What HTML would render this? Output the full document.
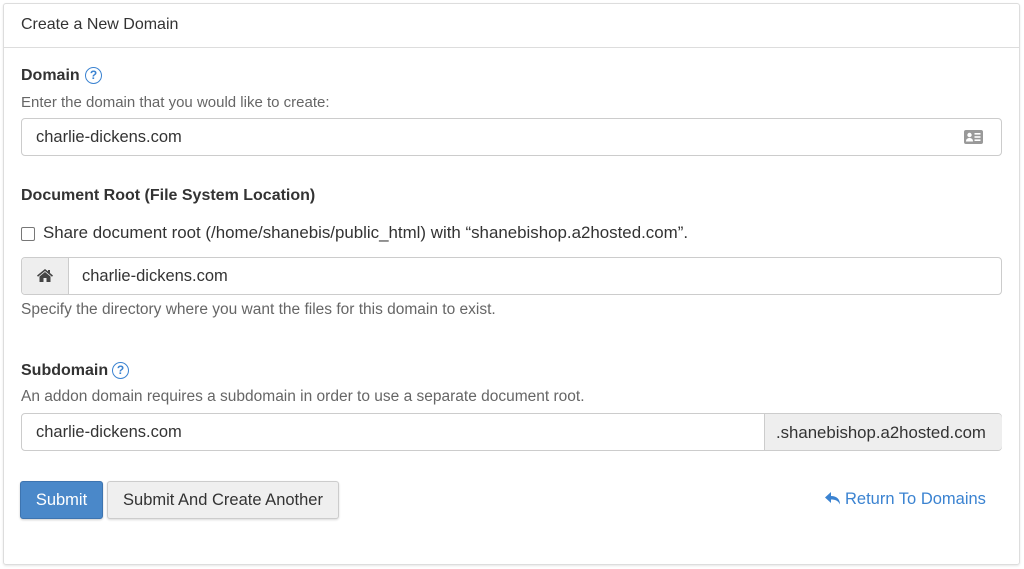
<!DOCTYPE html>
<html><head><meta charset="utf-8"><style>
*{box-sizing:border-box;margin:0;padding:0}
body{width:1024px;height:569px;background:#fff;font-family:"Liberation Sans",sans-serif;color:#333;position:relative;overflow:hidden}
.abs{position:absolute;white-space:nowrap}
.panel{position:absolute;left:3px;top:3px;width:1017px;height:562px;border:1px solid #ddd;border-radius:3px;box-shadow:0 1px 2px rgba(0,0,0,.1)}
.hdr{position:absolute;left:3px;top:47px;width:1017px;height:1px;background:#ddd}
.lbl{font-weight:bold;font-size:16px;color:#333}
.txt{font-size:15px;color:#666}
.inp{position:absolute;border:1px solid #ccc;border-radius:4px;background:#fff;font-size:16.5px;color:#333}
.help{position:absolute;width:17px;height:17px;border:1.7px solid #3b83d1;border-radius:50%;color:#3b83d1;font-size:12px;font-weight:bold;text-align:center;line-height:14px}
</style></head><body>
<div class="panel"></div>
<div class="hdr"></div>
<div class="abs" style="left:21px;top:16px;font-size:16px;color:#333">Create a New Domain</div>

<div class="abs lbl" style="left:21px;top:67px">Domain</div>
<div class="help" style="left:85px;top:67px">?</div>
<div class="abs txt" style="left:21px;top:94px">Enter the domain that you would like to create:</div>
<div class="inp" style="left:21px;top:118px;width:981px;height:38px"><span class="abs" style="left:14px;top:9px">charlie-dickens.com</span>
<svg class="abs" style="left:942px;top:11px" width="19" height="14" viewBox="0 0 19 14"><rect x="0" y="0" width="19" height="14" rx="2" fill="#999"/><circle cx="5.5" cy="5" r="2.2" fill="#fff"/><path d="M2 11.5c0-2.5 1.5-3.5 3.5-3.5s3.5 1 3.5 3.5z" fill="#fff"/><rect x="10.5" y="3" width="6" height="1.6" fill="#fff"/><rect x="10.5" y="6.2" width="6" height="1.6" fill="#fff"/><rect x="10.5" y="9.4" width="6" height="1.6" fill="#fff"/></svg></div>

<div class="abs lbl" style="left:21px;top:187px">Document Root (File System Location)</div>
<div class="abs" style="left:21px;top:227px;width:14px;height:14px;border:1px solid #777;border-radius:2px"></div>
<div class="abs" style="left:43px;top:223px;font-size:16.9px;color:#333">Share document root (/home/shanebis/public_html) with “shanebishop.a2hosted.com”.</div>
<div class="inp" style="left:21px;top:257px;width:981px;height:38px">
<div class="abs" style="left:0;top:0;width:47px;height:36px;background:#eee;border-right:1px solid #ccc;border-radius:4px 0 0 4px"></div>
<svg class="abs" style="left:15px;top:11px" width="16" height="13" viewBox="0 0 16 13"><path d="M8 0L0 6.5l1 1.2L8 2l7 5.7 1-1.2L13 4V1h-2v1.4z" fill="#444"/><path d="M2.5 7.5L8 3l5.5 4.5V13H9.5V9h-3v4h-4z" fill="#444"/></svg>
<span class="abs" style="left:60px;top:9px">charlie-dickens.com</span></div>
<div class="abs txt" style="left:21px;top:301px;font-size:15.5px">Specify the directory where you want the files for this domain to exist.</div>

<div class="abs lbl" style="left:21px;top:362px">Subdomain</div>
<div class="help" style="left:112px;top:362px">?</div>
<div class="abs txt" style="left:21px;top:388px;font-size:15.5px">An addon domain requires a subdomain in order to use a separate document root.</div>
<div class="inp" style="left:21px;top:413px;width:981px;height:38px"><span class="abs" style="left:14px;top:9px">charlie-dickens.com</span>
<div class="abs" style="left:742px;top:0;width:238px;height:36px;background:#eee;border-left:1px solid #ccc;border-radius:0 4px 4px 0"><span class="abs" style="left:11px;top:9px;font-size:16.8px">.shanebishop.a2hosted.com</span></div></div>

<div class="abs" style="left:20px;top:481px;width:83px;height:38px;background:#4a88c9;border:1px solid #3d74b0;border-radius:3px;color:#fff;font-size:16.5px;text-align:center;line-height:36px;box-shadow:0 1px 2px rgba(0,0,0,.2)">Submit</div>
<div class="abs" style="left:107px;top:481px;width:232px;height:38px;background:#efefef;border:1px solid #ccc;border-radius:3px;color:#333;font-size:16.5px;text-align:center;line-height:36px;box-shadow:0 1px 2px rgba(0,0,0,.15)">Submit And Create Another</div>
<svg class="abs" style="left:825px;top:492px" width="16" height="14" viewBox="0 0 16 14"><path d="M6 0L0 5.5 6 11V7.5c4 0 7 1 9 5 0-5-3-8.5-9-8.5z" fill="#3b83d1"/></svg>
<div class="abs" style="left:845px;top:490px;font-size:16.5px;color:#3b83d1">Return To Domains</div>
</body></html>
